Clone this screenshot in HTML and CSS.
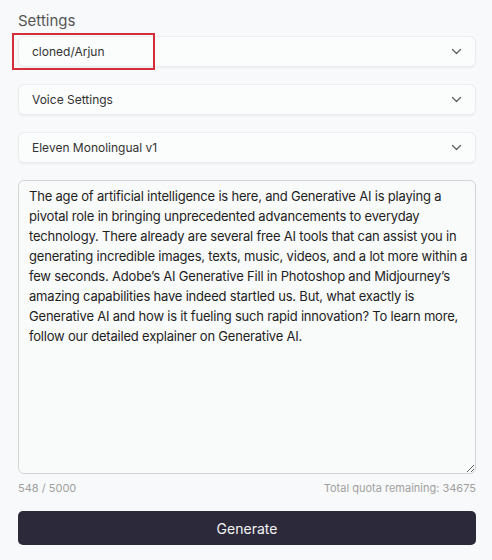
FILE: index.html
```html
<!DOCTYPE html>
<html>
<head>
<meta charset="utf-8">
<link rel="stylesheet" href="styles.css">
</head>
<body>
<div class="page">
  <div class="title">Settings</div>
  <div class="select highlighted">
    <span>cloned/Arjun</span>
    <svg class="chev" width="11" height="7" viewBox="0 0 11 7"><path d="M1.5 1.5 L5.5 5.5 L9.5 1.5" fill="none" stroke="#666" stroke-width="1.4" stroke-linecap="round" stroke-linejoin="round"/></svg>
    <div class="mark"></div>
  </div>
  <div class="select">
    <span>Voice Settings</span>
    <svg class="chev" width="11" height="7" viewBox="0 0 11 7"><path d="M1.5 1.5 L5.5 5.5 L9.5 1.5" fill="none" stroke="#666" stroke-width="1.4" stroke-linecap="round" stroke-linejoin="round"/></svg>
  </div>
  <div class="select">
    <span>Eleven Monolingual v1</span>
    <svg class="chev" width="11" height="7" viewBox="0 0 11 7"><path d="M1.5 1.5 L5.5 5.5 L9.5 1.5" fill="none" stroke="#666" stroke-width="1.4" stroke-linecap="round" stroke-linejoin="round"/></svg>
  </div>
  <textarea class="text">The age of artificial intelligence is here, and Generative AI is playing a pivotal role in bringing unprecedented advancements to everyday technology. There already are several free AI tools that can assist you in generating incredible images, texts, music, videos, and a lot more within a few seconds. Adobe’s AI Generative Fill in Photoshop and Midjourney’s amazing capabilities have indeed startled us. But, what exactly is Generative AI and how is it fueling such rapid innovation? To learn more, follow our detailed explainer on Generative AI.</textarea>
  <div class="meta">
    <span>548 / 5000</span>
    <span>Total quota remaining: 34675</span>
  </div>
  <button class="generate">Generate</button>
</div>
</body>
</html>
```
FILE: styles.css
```css
html, body {
  margin: 0;
  padding: 0;
  background: #f8f9fa;
}
.page {
  padding: 11px 16px 0 18px;
  font-family: Inter, "Noto Sans", sans-serif;
  display: flex;
  flex-direction: column;
}
.title {
  font-size: 15px;
  line-height: 20px;
  color: #555;
  margin-bottom: 5px;
}
.select {
  position: relative;
  height: 31px;
  box-sizing: border-box;
  border: 1px solid #ececec;
  border-radius: 6px;
  background: #fbfcfc;
  box-shadow: 0 1px 2px rgba(0,0,0,0.05);
  display: flex;
  align-items: center;
  justify-content: space-between;
  padding: 0 13px 0 13px;
  font-size: 12px;
  color: #333;
  margin-bottom: 17px;
}
.chev { display: block; }
.mark {
  position: absolute;
  left: -7px;
  top: -4px;
  width: 139px;
  height: 33px;
  border: 2px solid #d32f3a;
}
.text {
  display: block;
  width: 100%;
  height: 294px;
  box-sizing: border-box;
  border: 1px solid #d4d4d4;
  border-radius: 6px;
  background: #f9fafa;
  padding: 5px 4px 5px 10px;
  font-family: Inter, "Noto Sans", sans-serif;
  font-size: 13px;
  letter-spacing: -0.2px;
  line-height: 20px;
  color: #1e1e1e;
  resize: vertical;
  margin: 0;
}
.meta {
  display: flex;
  justify-content: space-between;
  font-size: 11px;
  color: #a0a0a0;
  margin-top: 6px;
  line-height: 16px;
}
.generate {
  margin-top: 15px;
  height: 34px;
  border: none;
  border-radius: 5px;
  background: #2c2a3a;
  color: #f4f4f6;
  font-family: Inter, "Noto Sans", sans-serif;
  font-size: 14px;
}
```
